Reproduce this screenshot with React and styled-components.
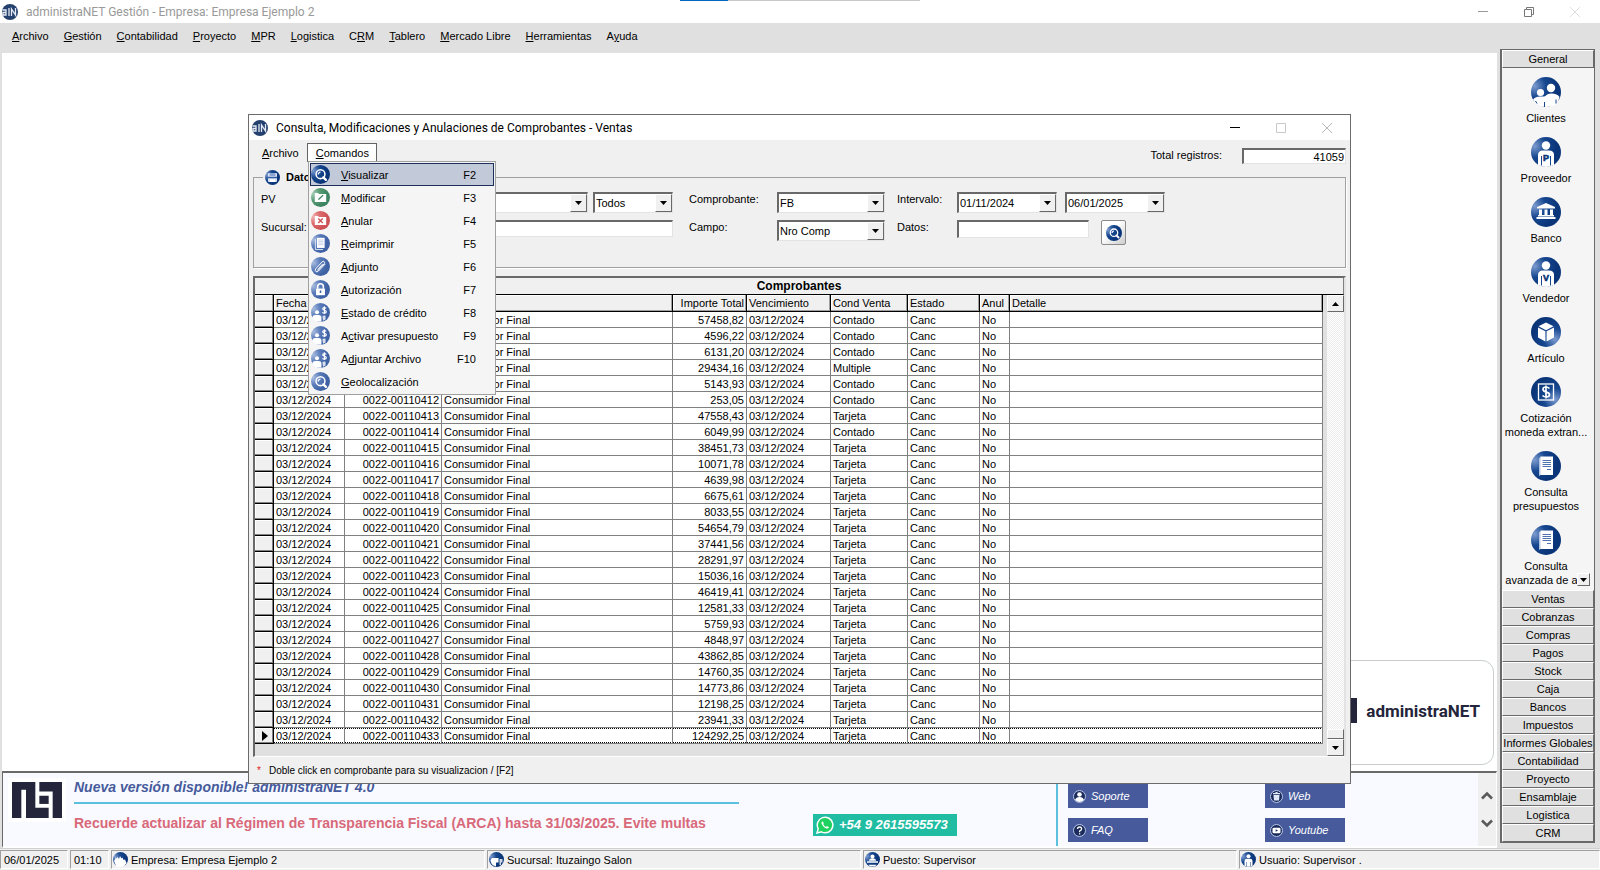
import React, { useState } from 'react';
import styled, { createGlobalStyle, css } from 'styled-components';

const GlobalStyle = createGlobalStyle`
  * {
    box-sizing: border-box;
  }
  body {
    margin: 0;
    background: #e0e0e0;
    color: #000000;
    font-family: 'Liberation Sans', Arial, sans-serif;
    font-size: 11px;
    line-height: 14px;
  }
  button,
  input,
  select {
    font: inherit;
    color: inherit;
  }
`;

const AppWrap = styled.div`
  display: flex;
  flex-direction: column;
  min-height: 100vh;
`;

const TitleBar = styled.header`
  position: relative;
  display: flex;
  align-items: center;
  height: 23px;
  padding: 0 2px;
  background: #ffffff;
`;

const TopStrip = styled.div`
  position: absolute;
  top: 0;
  left: 680px;
  width: 240px;
  height: 1px;
  background: linear-gradient(to right, #0067c0 20%, #c8c8c8 20%);
`;

const AppTitle = styled.h1`
  flex: 1;
  margin: 0 0 0 8px;
  font-family: Roboto, 'Open Sans', sans-serif;
  font-size: 12px;
  font-weight: 400;
  line-height: 16px;
  color: ${props => (props.$active ? '#000000' : '#999999')};
`;

const WinButton = styled.button`
  display: flex;
  align-items: center;
  justify-content: center;
  width: 46px;
  height: 100%;
  padding: 0;
  border: 0;
  background: transparent;
  color: ${props => props.$color};
`;

const MenuBar = styled.nav`
  display: flex;
  align-items: center;
  height: 26px;
  padding: 0 5px;
`;

const MenuButton = styled.button`
  padding: 0 8px 0 7px;
  border: 0;
  background: transparent;
  white-space: nowrap;
`;

const Main = styled.div`
  flex: 1;
  display: flex;
`;

const Workspace = styled.main`
  position: relative;
  flex: 1;
  display: flex;
  flex-direction: column;
  margin-top: 4px;
  padding-left: 2px;
`;

const Desktop = styled.div`
  position: relative;
  flex: 1;
  background: #ffffff;
`;

const BrandCard = styled.div`
  position: absolute;
  right: 3px;
  bottom: 6px;
  display: flex;
  align-items: center;
  gap: 9px;
  height: 105px;
  padding: 0 13px 4px 30px;
  border: 1px solid #c8cccc;
  border-radius: 12px;
  color: #24243a;
  font-family: Roboto, sans-serif;
  font-size: 17px;
  font-weight: 700;
`;

/* ---------- outlook bar ---------- */

const SideBar = styled.aside`
  width: 95px;
  margin: 0 5px 0 3px;
`;

const SideFrame = styled.div`
  border: 1px solid #696969;
  border-left-width: 2px;
  background: #f5f5f5;
`;

const SideButton = styled.button`
  display: block;
  width: 100%;
  height: 18px;
  padding: 0;
  border: 1px solid;
  border-color: #ffffff #696969 #696969 #ffffff;
  background: #e0e0e0;
  line-height: 16px;
  white-space: nowrap;
`;

const SideList = styled.div`
  position: relative;
  padding: 9px 4px 3px 0;
`;

const SideItem = styled.button`
  display: flex;
  flex-direction: column;
  align-items: center;
  gap: 4px;
  width: 100%;
  padding: 0;
  margin-bottom: 12px;
  border: 0;
  background: transparent;

  &:last-of-type {
    margin-bottom: 0;
  }
`;

const SideLabel = styled.span`
  width: 86px;
  text-align: center;
`;

const SideScroll = styled.span`
  position: absolute;
  right: 4px;
  bottom: 4px;
  display: flex;
  align-items: center;
  justify-content: center;
  width: 13px;
  height: 13px;
  border: 1px solid;
  border-color: #ffffff #696969 #696969 #ffffff;
  background: #f0f0f0;
`;

/* ---------- child window ---------- */

const ChildWindow = styled.section`
  position: absolute;
  z-index: 2;
  top: 61px;
  left: 248px;
  right: 146px;
  border: 1px solid #6b6b6b;
  background: #f0f0f0;
`;

const ChildTitle = styled.div`
  display: flex;
  align-items: center;
  height: 25px;
  padding-left: 3px;
  background: #ffffff;
`;

const ChildBody = styled.div`
  padding: 3px 4px 5px;
`;

const ToolRow = styled.div`
  display: flex;
  align-items: flex-start;
  justify-content: space-between;
  height: 26px;
`;

const ChildMenu = styled.div`
  position: relative;
  display: flex;
`;

const ChildMenuButton = styled.button`
  height: 19px;
  padding: 0 7px 0 8px;
  border: 1px solid transparent;
  border-bottom: 0;
  background: transparent;

  ${props =>
    props.$open &&
    css`
      border-color: #646464;
      background: #ffffff;
    `}
`;

const Popup = styled.div`
  position: absolute;
  z-index: 5;
  top: 18px;
  left: 55px;
  width: 188px;
  padding: 1px;
  border: 1px solid #a0a0a0;
  background: #f5f5f5;
`;

const PopupItem = styled.button`
  display: grid;
  grid-template-columns: 22px 1fr auto;
  align-items: center;
  column-gap: 8px;
  width: 100%;
  height: 23px;
  padding: 0 17px 0 0;
  border: 1px solid ${props => (props.$selected ? '#1c2f5a' : 'transparent')};
  background: ${props => (props.$selected ? '#c2cad9' : 'transparent')};
  text-align: left;
`;

const TotalBox = styled.div`
  display: flex;
  gap: 20px;
  padding: 5px 0 0;
`;

const TextBox = styled.input`
  width: ${props => props.$width || '100%'};
  height: ${props => props.$height || '18px'};
  padding: 0 1px;
  border: 1px solid;
  border-color: #696969 #e3e3e3 #e3e3e3 #696969;
  border-width: 2px 1px 1px 2px;
  border-radius: 0;
  background: #ffffff;
  text-align: ${props => props.$align || 'left'};
`;

const FilterBox = styled.fieldset`
  margin: 0;
  padding: 7px 7px 26px;
  border: 1px solid #a0a0a0;
  box-shadow: 1px 1px 0 #ffffff;
`;

const FilterLegend = styled.legend`
  display: flex;
  align-items: center;
  gap: 6px;
  height: 16px;
  margin-left: 2px;
  padding: 0 4px 0 2px;
  font-weight: 700;
`;

const FilterGrid = styled.div`
  display: grid;
  grid-template-columns: 49px 363px 104px 108px 72px auto;
  row-gap: 7px;
  align-items: start;
  justify-content: start;
  height: 49px;
`;

const FieldLabel = styled.label`
  padding-left: ${props => props.$indent || '0'};
`;

const FieldRow = styled.div`
  display: flex;
  gap: ${props => props.$gap || '8px'};
`;

const SelectWrap = styled.span`
  position: relative;
  display: block;
  width: ${props => props.$width || '100%'};
  height: 21px;
  border: 1px solid;
  border-width: 2px 1px 1px 2px;
  border-color: #696969 #e3e3e3 #e3e3e3 #696969;
  background: #ffffff;
`;

const SelectBox = styled.select`
  appearance: none;
  display: block;
  width: 100%;
  height: 18px;
  padding: 0 18px 0 1px;
  border: 0;
  border-radius: 0;
  background: transparent;
`;

const SelectArrow = styled.span`
  position: absolute;
  top: 0;
  right: 0;
  bottom: 0;
  display: flex;
  align-items: center;
  justify-content: center;
  width: 17px;
  border: 1px solid;
  border-color: #ffffff #696969 #696969 #ffffff;
  background: #f0f0f0;
  pointer-events: none;
`;

const SearchButton = styled.button`
  display: flex;
  align-items: center;
  justify-content: center;
  width: 25px;
  height: 25px;
  padding: 0;
  border: 1px solid #8c8c8c;
  border-radius: 2px;
  background: linear-gradient(135deg, #ffffff 40%, #cccccc);
`;

/* ---------- grid ---------- */

const GridBox = styled.div`
  margin-top: 8px;
  border: 1px solid;
  border-width: 2px 2px 1px 2px;
  border-color: #696969 #e3e3e3 #ffffff #696969;
`;

const GridCaption = styled.div`
  height: 17px;
  border-bottom: 1px solid #000000;
  border-right: 1px solid #808080;
  font-size: 12px;
  font-weight: 700;
  line-height: 16px;
  text-align: center;
`;

const GridArea = styled.div`
  display: flex;
`;

const TableWrap = styled.div`
  flex: 1;
  padding: 0 4px 12px 0;
  background: #e0e0e0;
`;

const Table = styled.table`
  width: 100%;
  table-layout: fixed;
  border-collapse: separate;
  border-spacing: 0;
`;

const HeadCell = styled.th`
  height: 17px;
  padding: 0 2px;
  border-right: 1px solid #000000;
  border-bottom: 1px solid #000000;
  background: #f0f0f0;
  box-shadow: inset -1px -1px 0 #a0a0a0, inset 1px 1px 0 #ffffff;
  font-weight: 400;
  text-align: ${props => props.$align || 'left'};
  white-space: nowrap;
`;

const Cell = styled.td`
  height: 16px;
  padding: 0 2px;
  border-right: 1px solid #808080;
  border-bottom: 1px solid #808080;
  background: #ffffff;
  text-align: ${props => props.$align || 'left'};
  white-space: nowrap;

  ${props =>
    props.$current &&
    css`
      background-image: repeating-linear-gradient(
          to right,
          #000000 0 1px,
          transparent 1px 2px
        ),
        repeating-linear-gradient(to right, #000000 0 1px, transparent 1px 2px);
      background-size: 100% 1px;
      background-position: top, bottom;
      background-repeat: no-repeat;
    `}
`;

const RowMark = styled.td`
  height: 16px;
  padding: 0 5px 0 0;
  border-right: 1px solid #000000;
  border-bottom: 1px solid #000000;
  background: #f0f0f0;
  box-shadow: inset -1px -1px 0 #808080, inset 1px 1px 0 #ffffff;

  svg {
    display: block;
    margin-left: auto;
  }
`;

const ScrollBar = styled.div`
  display: flex;
  flex-direction: column;
  width: 17px;
`;

const ScrollTrack = styled.div`
  flex: 1;
  background: repeating-conic-gradient(#ffffff 0 25%, #ececec 0 50%) 0 0 / 2px
    2px;
`;

const ScrollButton = styled.button`
  display: flex;
  align-items: center;
  justify-content: center;
  width: 17px;
  height: 17px;
  padding: 0;
  border: 1px solid;
  border-color: #ffffff #696969 #696969 #ffffff;
  background: #f0f0f0;
`;

const ScrollThumb = styled.div`
  height: 10px;
  border: 1px solid;
  border-color: #ffffff #696969 #696969 #ffffff;
  background: #f0f0f0;
`;

const HelpLine = styled.p`
  margin: 7px 0 0;
  padding-left: 4px;
  font-size: 10px;
  line-height: 14px;

  span {
    margin-right: 8px;
    color: #e02020;
  }
`;

/* ---------- news banner ---------- */

const Banner = styled.section`
  display: flex;
  height: 77px;
  border: 1px solid;
  border-width: 2px 1px 2px 1px;
  border-color: #696969 #ffffff #ffffff #696969;
  background: #f8faff;
`;

const LogoBox = styled.div`
  width: 58px;
  height: 44px;
  margin: 5px 0 0 5px;
  padding: 4px;
  background: #ffffff;
`;

const News = styled.div`
  flex: 1;
  display: flex;
  align-items: flex-start;
  padding-left: 8px;
`;

const NewsText = styled.div`
  width: 665px;
`;

const NewsTitle = styled.h2`
  margin: 0;
  padding: 5px 0 6px;
  border-bottom: 2px solid #5bc0de;
  color: #465a9c;
  font-size: 14px;
  font-style: italic;
  font-weight: 700;
  line-height: 18px;
`;

const NewsAlert = styled.p`
  margin: 9px 0 0;
  color: #d9697a;
  font-size: 14px;
  font-weight: 700;
  line-height: 20px;
  white-space: nowrap;
`;

const Phone = styled.a`
  display: flex;
  align-items: center;
  gap: 5px;
  height: 22px;
  margin: 41px 0 0 74px;
  padding: 0 9px 0 3px;
  background: #20bda2;
  color: #ffffff;
  font-size: 13px;
  font-style: italic;
  font-weight: 700;
  text-decoration: none;
  white-space: nowrap;
`;

const Links = styled.div`
  display: grid;
  grid-template-columns: 80px 80px;
  grid-auto-rows: 24px;
  column-gap: 117px;
  row-gap: 10px;
  width: 422px;
  padding: 11px 0 0 10px;
  border-left: 2px solid #5bc0de;
`;

const LinkButton = styled.a`
  display: flex;
  align-items: center;
  gap: 5px;
  padding-left: 5px;
  background: #465a9c;
  color: #ffffff;
  font-size: 11px;
  font-style: italic;
  text-decoration: none;
`;

const BannerScroll = styled.div`
  display: flex;
  flex-direction: column;
  justify-content: space-between;
  align-items: center;
  width: 18px;
  padding: 16px 0 15px;
  background: #f0f0f0;

  button {
    display: block;
    padding: 0;
    border: 0;
    background: transparent;
  }
`;

/* ---------- status bar ---------- */

const StatusBar = styled.footer`
  display: grid;
  grid-template-columns: 68px 39px 374fr 374fr 374fr 361fr;
  column-gap: 2px;
  padding: 1px 0;
  border-top: 1px solid #d0d0d0;
  background: #f0f0f0;
`;

const StatusPanel = styled.div`
  display: flex;
  align-items: center;
  gap: 3px;
  height: 19px;
  padding: 0 1px;
  border: 1px solid;
  border-color: #a0a0a0 #ffffff #ffffff #a0a0a0;
  white-space: nowrap;
`;

const StatusText = styled.span`
  padding-left: ${props => (props.$plain ? '2px' : '0')};
`;

/* ---------- icons ---------- */

const ORB_COLORS = {
  navy: ['#7d9cd0', '#16478f', '#0b3579'],
  blue: ['#a9bcdf', '#5b7dbb', '#3f62a5'],
  green: ['#a3cdb4', '#559a73', '#3c8560'],
  red: ['#f2b3b3', '#dc6a6c', '#cc5355'],
};

const Glyph = ({ name }) => {
  switch (name) {
    case 'people':
      return (
        <g fill="#fff">
          <circle cx="20" cy="11" r="4.200" />
          <circle cx="9.500" cy="15.500" r="3.600" />
          <path d="M2 22.500q3-3.500 8-3 3.500 0 4.500-.5 1.500-2.500 6-2.500 6 0 8 3.500Q27 30 15 30 5 30 2 22.500z" />
          <path d="M13.500 25v5M4.500 24l1.500 2.500M25 22.500v4" stroke="#16478f" strokeWidth="1" />
        </g>
      );
    case 'personP':
    case 'personV':
      return (
        <g fill="#fff">
          <circle cx="15" cy="8.500" r="4.200" />
          <path d="M7 28V18q0-4.500 5-4.500h6q5 0 5 4.500v10q-8 4-16 0z" />
          <path d="M10.500 19v9.500M19.500 19v9.500" stroke="#16478f" strokeWidth="1" />
          <text
            x="15"
            y="23.500"
            textAnchor="middle"
            fontFamily="Liberation Sans"
            fontSize="9"
            fontWeight="700"
            stroke="#0b3579"
            strokeWidth=".6"
            fill="#0b3579"
          >
            {name === 'personP' ? 'P' : 'V'}
          </text>
        </g>
      );
    case 'bank':
      return (
        <g fill="#fff">
          <path d="M15 6l9 4v1.500H6V10z" />
          <path d="M8 12.500h3V18H8zM13.500 12.500h3V18h-3zM19 12.500h3V18h-3zM7 18h16v1.500H7zM5.500 20h19v2h-19z" />
        </g>
      );
    case 'box':
      return (
        <g fill="#fff">
          <path d="M15 5.500l7.500 3.800L15 13.300 7.500 9.300z" />
          <path d="M7 10.500l7.400 3.800V24.500L7 20.500zM23 10.500l-7.400 3.800v10.200L23 20.500z" />
        </g>
      );
    case 'money':
      return (
        <g>
          <rect x="7.500" y="7" width="15" height="16" fill="none" stroke="#fff" strokeWidth="1.300" />
          <path
            d="M18.500 11.500q-1.500-1.500-3.700-1.500-2.800 0-2.800 2.200 0 1.900 3 2.700 3.500.9 3.500 2.900 0 2.200-3.300 2.200-2.200 0-3.700-1.500M15 8.500v13"
            fill="none"
            stroke="#fff"
            strokeWidth="1.700"
          />
        </g>
      );
    case 'doc':
      return (
        <g>
          <path d="M8 7l3-1v17l-3 2z" fill="#b5c6e3" />
          <path d="M9.500 5.500H22V24H9.500z" fill="#fff" />
          <path d="M11.500 9.500h8.500M11.500 11.500h8.500M11.500 13.500h8.500M11.500 15.500h8.500M16 18.500h4" stroke="#3c62a8" strokeWidth=".9" />
        </g>
      );
    case 'search':
      return (
        <g fill="none" stroke="#fff">
          <circle cx="15" cy="14.500" r="7" strokeWidth="2.400" />
          <path d="M11.500 15a3.500 3.500 0 013.500-3.700" strokeWidth="2" />
          <path d="M19.500 19.500l4 4" strokeWidth="3.600" strokeLinecap="round" />
        </g>
      );
    case 'edit':
      return (
        <g>
          <path d="M6 8h5l1.500 1.500H24V22H6z" fill="#fff" />
          <path d="M11 19l1-2.500 6.500-6 1.500 1.500-6.500 6z" fill="#3c8560" />
        </g>
      );
    case 'cancel':
      return (
        <g>
          <path d="M6 8h5l1.500 1.500H24V22H6z" fill="#fff" />
          <path d="M11.500 12l7 7M18.500 12l-7 7" stroke="#cc5355" strokeWidth="2.200" />
        </g>
      );
    case 'print':
      return (
        <g>
          <path d="M9.500 6h12v16h-12z" fill="#fff" />
          <path d="M11.500 9.500h8M11.500 12h8M11.500 14.500h8M11.500 17h8" stroke="#a9bcdf" strokeWidth="1" />
          <path d="M7 8v16.500h12" fill="none" stroke="#dde5f3" strokeWidth="1.500" />
        </g>
      );
    case 'clip':
      return (
        <path
          d="M10 22.500L21 10.500q1.500-2.500-.5-3.500-1.500-.8-3 .8L7.500 18.500q-2 3 .3 4.600 2 1 4-1L22.500 11M10.500 20l8-9"
          fill="none"
          stroke="#fff"
          strokeWidth="1.500"
        />
      );
    case 'lock':
      return (
        <g>
          <path d="M10.500 14v-3.500a4.500 4.500 0 019 0V14" fill="none" stroke="#fff" strokeWidth="2.400" />
          <rect x="8" y="13.500" width="14" height="10.500" fill="#fff" />
          <path d="M15 16.500v4" stroke="#3f62a5" strokeWidth="2.400" />
        </g>
      );
    case 'credit':
      return (
        <g fill="#fff">
          <circle cx="9.500" cy="14.500" r="3.200" />
          <path d="M2 24q0-5 5-5h5q4.500 0 4.500 4.500v6Q6 30 2 24z" />
          <path d="M18 21q2-2 5-1v6l-4 2z" opacity=".8" />
          <path
            d="M24 8.500q-1.200-1.300-3-1.300-2.500 0-2.500 2 0 1.500 2.700 2.200 3 .8 3 2.600 0 2-3 2-2 0-3.200-1.300M21.200 5v12.500"
            fill="none"
            stroke="#fff"
            strokeWidth="1.900"
          />
        </g>
      );
    case 'save':
      return (
        <g>
          <rect x="6" y="6" width="18" height="18" rx="2" fill="#dbe4f3" />
          <path d="M9 6h12v6H9z" fill="#8ea6d2" />
          <path d="M6 13.500h18v3H6z" fill="#2f5aa3" />
          <path d="M10 19h10v5H10z" fill="#fff" />
        </g>
      );
    case 'city':
      return <path d="M2 18l3-5v-3l3 3 1-4 3 5 2-6 3 5 2-2 2 5 3-1 3 7-5 7q-8 4-15 1z" fill="#fff" />;
    case 'branch':
      return (
        <g fill="#fff">
          <path d="M6 12h13v9h-5v8Q3 26 3 16z" />
          <path d="M21 14h6v7h-3v5h-3z" opacity=".8" />
        </g>
      );
    case 'desk':
      return (
        <g fill="#fff">
          <circle cx="15" cy="9" r="4" />
          <path d="M8 17.500q0-5 7-5t7 5z" />
          <path d="M4 18.500h22v3H4zM7 25.500h16l-3 3.500h-10z" />
        </g>
      );
    case 'user':
      return (
        <g fill="#fff">
          <circle cx="15" cy="8.500" r="4" />
          <path d="M7 27v-9q0-4.500 5-4.500h6q5 0 5 4.500v9l-3 2v-9h-1v9.500h-8V20h-1v9z" />
        </g>
      );
    default:
      return null;
  }
};

const Orb = ({ name, tone = 'navy', size = 22, flip }) => {
  const colors = ORB_COLORS[tone];
  const id = `orb-${tone}-${flip ? 'b' : 'a'}`;
  return (
    <svg width={size} height={size} viewBox="0 0 30 30" aria-hidden="true">
      <defs>
        <radialGradient id={id} cx={flip ? '80%' : '12%'} cy={flip ? '75%' : '30%'} r="75%">
          <stop offset="0" stopColor={colors[0]} />
          <stop offset=".5" stopColor={colors[1]} />
          <stop offset="1" stopColor={colors[2]} />
        </radialGradient>
      </defs>
      <circle cx="15" cy="15" r="15" fill={`url(#${id})`} />
      <Glyph name={name} />
    </svg>
  );
};

const AppIcon = () => (
  <svg width="16" height="16" viewBox="0 0 16 16" aria-hidden="true">
    <circle cx="8" cy="8" r="8" fill="#24406e" />
    <path d="M.5 6H4v5H1V8.500h3M7 4v8M9.500 12V5l4 6V4" fill="none" stroke="#e6ecf5" strokeWidth="1.300" />
  </svg>
);

const BrandLogo = ({ width, height }) => (
  <svg width={width} height={height} viewBox="0 0 150 110" preserveAspectRatio="none" aria-hidden="true">
    <g fill="#24243a">
      <path d="M0 0H70V79H110V110H42V24H28V110H0z" />
      <path d="M82 42H110V67H82z" />
      <path d="M82 0H150V110H122V29H82z" />
    </g>
  </svg>
);

const Triangle = ({ dir = 'down' }) => (
  <svg width="7" height="4" viewBox="0 0 7 4" aria-hidden="true">
    <path d={dir === 'down' ? 'M0 0H7L3.500 4z' : 'M0 4H7L3.500 0z'} fill="#000" />
  </svg>
);

const Chevron = ({ dir }) => (
  <svg width="12" height="9" viewBox="0 0 12 9" aria-hidden="true">
    <path
      d={dir === 'up' ? 'M1 7.500L6 2.500 11 7.500' : 'M1 1.500L6 6.500 11 1.500'}
      fill="none"
      stroke="#5a5a5a"
      strokeWidth="2.600"
    />
  </svg>
);

const MinIcon = () => (
  <svg width="10" height="10" viewBox="0 0 10 10" aria-hidden="true">
    <path d="M0 4.500H10" stroke="currentColor" />
  </svg>
);

const MaxIcon = () => (
  <svg width="10" height="10" viewBox="0 0 10 10" aria-hidden="true">
    <path d="M.5.5H9.500V9.500H.5z" fill="none" stroke="currentColor" />
  </svg>
);

const RestoreIcon = () => (
  <svg width="10" height="10" viewBox="0 0 10 10" aria-hidden="true">
    <path d="M.5 2.500H7.500V9.500H.5zM2.500 2.500V.5H9.500V7.500H7.500" fill="none" stroke="currentColor" />
  </svg>
);

const CloseIcon = () => (
  <svg width="10" height="10" viewBox="0 0 10 10" aria-hidden="true">
    <path d="M0 0L10 10M10 0L0 10" stroke="currentColor" />
  </svg>
);

const WhatsIcon = () => (
  <svg width="18" height="18" viewBox="0 0 18 18" aria-hidden="true">
    <path d="M1 17l1.200-4.300A7.800 7.800 0 119.200 16.800q-2 0-3.800-1z" fill="#1fd15f" stroke="#fff" strokeWidth="1.500" />
    <path d="M6.300 5.200q-1.300 1-.6 2.800 1.300 3 4.600 4.500 2 .5 2.700-1.200l-2-1.300-1.100 1Q8 10.200 7.200 8l.7-1z" fill="#fff" />
  </svg>
);

const LinkIcon = ({ name }) => (
  <svg width="13" height="13" viewBox="0 0 13 13" aria-hidden="true">
    <circle cx="6.500" cy="6.500" r="6" fill="#1b2c5c" stroke="#b9c6e6" />
    {name === 'user' && (
      <g fill="#fff">
        <circle cx="6.500" cy="4.500" r="2.300" />
        <path d="M2 10q1-3 4.500-3t4.500 3q-4.500 4-9 0z" />
      </g>
    )}
    {name === 'faq' && (
      <g fill="none" stroke="#fff" strokeWidth="1.300">
        <path d="M4.500 5Q4.600 3 6.600 3t2 1.900Q8.600 6 6.600 7v1.200M6.600 9.200v1.300" />
      </g>
    )}
    {name === 'web' && (
      <g fill="#dfe6f5">
        <path d="M3.500 5h6l-.5 5.500H4z" />
        <path d="M3 3h7v1.200H3zM5.500 2h2v1h-2z" />
      </g>
    )}
    {name === 'video' && (
      <g>
        <rect x="2.500" y="3.700" width="8" height="5.600" rx="1.300" fill="#fff" />
        <path d="M5.600 5.200L8 6.500 5.600 7.800z" fill="#1b2c5c" />
      </g>
    )}
  </svg>
);

/* ---------- data ---------- */

// [text, index of the underlined access key]
const MAIN_MENU = [
  ['Archivo', 0],
  ['Gestión', 0],
  ['Contabilidad', 0],
  ['Proyecto', 0],
  ['MPR', 0],
  ['Logistica', 0],
  ['CRM', 1],
  ['Tablero', 0],
  ['Mercado Libre', 0],
  ['Herramientas', 0],
  ['Ayuda', 1],
];

const COMMANDS = [
  ['Visualizar', 0, 'F2', 'search', 'navy'],
  ['Modificar', 0, 'F3', 'edit', 'green'],
  ['Anular', 0, 'F4', 'cancel', 'red'],
  ['Reimprimir', 0, 'F5', 'print', 'blue'],
  ['Adjunto', 0, 'F6', 'clip', 'blue'],
  ['Autorización', 0, 'F7', 'lock', 'blue'],
  ['Estado de crédito', 0, 'F8', 'credit', 'blue'],
  ['Activar presupuesto', 1, 'F9', 'credit', 'blue'],
  ['Adjuntar Archivo', 1, 'F10', 'credit', 'blue'],
  ['Geolocalización', 0, '', 'search', 'blue'],
];

const SIDE_ITEMS = [
  ['Clientes', 'people'],
  ['Proveedor', 'personP'],
  ['Banco', 'bank'],
  ['Vendedor', 'personV'],
  ['Artículo', 'box'],
  ['Cotización moneda extran...', 'money'],
  ['Consulta presupuestos', 'doc'],
  ['Consulta avanzada de a...', 'doc'],
];

const SIDE_GROUPS = [
  'Ventas',
  'Cobranzas',
  'Compras',
  'Pagos',
  'Stock',
  'Caja',
  'Bancos',
  'Impuestos',
  'Informes Globales',
  'Contabilidad',
  'Proyecto',
  'Ensamblaje',
  'Logistica',
  'CRM',
];

const COLUMNS = [
  ['Fecha', 71],
  ['Nro Comp', 97],
  ['Cliente', 231],
  ['Importe Total', 74, 'right'],
  ['Vencimiento', 84],
  ['Cond Venta', 77],
  ['Estado', 72],
  ['Anul', 30],
  ['Detalle'],
];

const FIRST_NUMBER = 110407;

const ROWS = [
  ['57458,82', 'Contado'],
  ['4596,22', 'Contado'],
  ['6131,20', 'Contado'],
  ['29434,16', 'Multiple'],
  ['5143,93', 'Contado'],
  ['253,05', 'Contado'],
  ['47558,43', 'Tarjeta'],
  ['6049,99', 'Contado'],
  ['38451,73', 'Tarjeta'],
  ['10071,78', 'Tarjeta'],
  ['4639,98', 'Tarjeta'],
  ['6675,61', 'Tarjeta'],
  ['8033,55', 'Tarjeta'],
  ['54654,79', 'Tarjeta'],
  ['37441,56', 'Tarjeta'],
  ['28291,97', 'Tarjeta'],
  ['15036,16', 'Tarjeta'],
  ['46419,41', 'Tarjeta'],
  ['12581,33', 'Tarjeta'],
  ['5759,93', 'Tarjeta'],
  ['4848,97', 'Tarjeta'],
  ['43862,85', 'Tarjeta'],
  ['14760,35', 'Tarjeta'],
  ['14773,86', 'Tarjeta'],
  ['12198,25', 'Tarjeta'],
  ['23941,33', 'Tarjeta'],
  ['124292,25', 'Tarjeta'],
];

const AccessText = ({ text, index }) => (
  <span>
    {text.slice(0, index)}
    <u>{text[index]}</u>
    {text.slice(index + 1)}
  </span>
);

const Select = ({ id, value, width, label }) => (
  <SelectWrap $width={width}>
    <SelectBox id={id} defaultValue={value} aria-label={label}>
      <option>{value}</option>
    </SelectBox>
    <SelectArrow>
      <Triangle />
    </SelectArrow>
  </SelectWrap>
);

const WindowButtons = ({ inactive }) => (
  <>
    <WinButton $color={inactive ? '#999999' : '#000000'} aria-label="Minimizar">
      <MinIcon />
    </WinButton>
    <WinButton $color={inactive ? '#777777' : '#c8c8c8'} aria-label="Maximizar">
      {inactive ? <RestoreIcon /> : <MaxIcon />}
    </WinButton>
    <WinButton $color={inactive ? '#e0e0e0' : '#b8b8b8'} aria-label="Cerrar">
      <CloseIcon />
    </WinButton>
  </>
);

const Filters = () => (
  <FilterBox>
    <FilterLegend>
      <Orb name="save" size={15} />
      Datos
    </FilterLegend>
    <FilterGrid>
      <FieldLabel htmlFor="pv">PV</FieldLabel>
      <FieldRow $gap="5px">
        <Select id="pv" value="" width="278px" />
        <Select value="Todos" width="80px" label="Tipo" />
      </FieldRow>
      <FieldLabel htmlFor="comprobante" $indent="16px">
        Comprobante:
      </FieldLabel>
      <Select id="comprobante" value="FB" />
      <FieldLabel htmlFor="desde" $indent="12px">
        Intervalo:
      </FieldLabel>
      <FieldRow>
        <Select id="desde" value="01/11/2024" width="100px" />
        <Select value="06/01/2025" width="100px" label="Hasta" />
      </FieldRow>
      <FieldLabel htmlFor="sucursal">Sucursal:</FieldLabel>
      <TextBox id="sucursal" $height="17px" />
      <FieldLabel htmlFor="campo" $indent="16px">
        Campo:
      </FieldLabel>
      <Select id="campo" value="Nro Comp" />
      <FieldLabel htmlFor="datos" $indent="12px">
        Datos:
      </FieldLabel>
      <FieldRow $gap="12px">
        <TextBox id="datos" $width="132px" />
        <SearchButton aria-label="Buscar">
          <Orb name="search" size={16} />
        </SearchButton>
      </FieldRow>
    </FilterGrid>
  </FilterBox>
);

const VoucherTable = () => (
  <GridBox>
    <GridCaption id="grid-caption">Comprobantes</GridCaption>
    <GridArea>
      <TableWrap>
        <Table aria-labelledby="grid-caption">
          <colgroup>
            <col width="19" />
            {COLUMNS.map(([name, width]) => (
              <col key={name} width={width} />
            ))}
          </colgroup>
          <thead>
            <tr>
              <HeadCell />
              {COLUMNS.map(([name, , align]) => (
                <HeadCell key={name} $align={align}>
                  {name}
                </HeadCell>
              ))}
            </tr>
          </thead>
          <tbody>
            {ROWS.map(([amount, terms], i) => {
              const current = i === ROWS.length - 1;
              return (
                <tr key={i}>
                  <RowMark>
                    {current && (
                      <svg width="6" height="10" viewBox="0 0 6 10" aria-hidden="true">
                        <path d="M0 0L6 5 0 10z" />
                      </svg>
                    )}
                  </RowMark>
                  <Cell $current={current}>03/12/2024</Cell>
                  <Cell $current={current} $align="right">
                    0022-00{FIRST_NUMBER + i}
                  </Cell>
                  <Cell $current={current}>Consumidor Final</Cell>
                  <Cell $current={current} $align="right">
                    {amount}
                  </Cell>
                  <Cell $current={current}>03/12/2024</Cell>
                  <Cell $current={current}>{terms}</Cell>
                  <Cell $current={current}>Canc</Cell>
                  <Cell $current={current}>No</Cell>
                  <Cell $current={current} />
                </tr>
              );
            })}
          </tbody>
        </Table>
      </TableWrap>
      <ScrollBar>
        <ScrollButton aria-label="Subir">
          <Triangle dir="up" />
        </ScrollButton>
        <ScrollTrack />
        <ScrollThumb />
        <ScrollButton aria-label="Bajar">
          <Triangle />
        </ScrollButton>
      </ScrollBar>
    </GridArea>
  </GridBox>
);

const VoucherWindow = () => {
  const [open, setOpen] = useState(true);
  const [selected, setSelected] = useState(0);

  return (
    <ChildWindow>
      <ChildTitle>
        <AppIcon />
        <AppTitle as="h2" $active>
          Consulta, Modificaciones y Anulaciones de Comprobantes - Ventas
        </AppTitle>
        <WindowButtons />
      </ChildTitle>
      <ChildBody>
        <ToolRow>
          <ChildMenu>
            <ChildMenuButton>
              <AccessText text="Archivo" index={0} />
            </ChildMenuButton>
            <ChildMenuButton $open={open} onClick={() => setOpen(!open)}>
              <AccessText text="Comandos" index={0} />
            </ChildMenuButton>
            {open && (
              <Popup>
                {COMMANDS.map(([text, index, shortcut, icon, tone], i) => (
                  <PopupItem
                    key={text}
                    $selected={selected === i}
                    onMouseEnter={() => setSelected(i)}
                  >
                    <Orb name={icon} tone={tone} size={19} />
                    <AccessText text={text} index={index} />
                    <span>{shortcut}</span>
                  </PopupItem>
                ))}
              </Popup>
            )}
          </ChildMenu>
          <TotalBox>
            <label htmlFor="total">Total registros:</label>
            <TextBox id="total" defaultValue="41059" $width="104px" $height="16px" $align="right" />
          </TotalBox>
        </ToolRow>
        <Filters />
        <VoucherTable />
        <HelpLine>
          <span>*</span>
          Doble click en comprobante para su visualizacion / [F2]
        </HelpLine>
      </ChildBody>
    </ChildWindow>
  );
};

const App = () => {
  return (
    <AppWrap>
      <GlobalStyle />
      <TitleBar>
        <TopStrip />
        <AppIcon />
        <AppTitle>administraNET Gestión - Empresa: Empresa Ejemplo 2</AppTitle>
        <WindowButtons inactive />
      </TitleBar>
      <MenuBar>
        {MAIN_MENU.map(([text, index]) => (
          <MenuButton key={text}>
            <AccessText text={text} index={index} />
          </MenuButton>
        ))}
      </MenuBar>
      <Main>
        <Workspace>
          <Desktop>
            <BrandCard>
              <BrandLogo width={35} height={25} />
              administraNET
            </BrandCard>
          </Desktop>
          <Banner>
            <LogoBox>
              <BrandLogo width={50} height={36} />
            </LogoBox>
            <News>
              <NewsText>
                <NewsTitle>Nueva versión disponible! administraNET 4.0</NewsTitle>
                <NewsAlert>
                  Recuerde actualizar al Régimen de Transparencia Fiscal (ARCA) hasta 31/03/2025. Evite
                  multas
                </NewsAlert>
              </NewsText>
              <Phone href="#whatsapp">
                <WhatsIcon />
                +54 9 2615595573
              </Phone>
            </News>
            <Links>
              <LinkButton href="#soporte">
                <LinkIcon name="user" />
                Soporte
              </LinkButton>
              <LinkButton href="#web">
                <LinkIcon name="web" />
                Web
              </LinkButton>
              <LinkButton href="#faq">
                <LinkIcon name="faq" />
                FAQ
              </LinkButton>
              <LinkButton href="#youtube">
                <LinkIcon name="video" />
                Youtube
              </LinkButton>
            </Links>
            <BannerScroll>
              <button aria-label="Anterior">
                <Chevron dir="up" />
              </button>
              <button aria-label="Siguiente">
                <Chevron dir="down" />
              </button>
            </BannerScroll>
          </Banner>
          <VoucherWindow />
        </Workspace>
        <SideBar>
          <SideFrame>
            <SideButton>General</SideButton>
            <SideList>
              {SIDE_ITEMS.map(([text, icon]) => (
                <SideItem key={text}>
                  <Orb name={icon} size={30} flip={icon === 'box' || icon === 'money'} />
                  <SideLabel>{text}</SideLabel>
                </SideItem>
              ))}
              <SideScroll aria-hidden="true">
                <Triangle />
              </SideScroll>
            </SideList>
            {SIDE_GROUPS.map(group => (
              <SideButton key={group}>{group}</SideButton>
            ))}
          </SideFrame>
        </SideBar>
      </Main>
      <StatusBar>
        <StatusPanel>
          <StatusText $plain>06/01/2025</StatusText>
        </StatusPanel>
        <StatusPanel>
          <StatusText $plain>01:10</StatusText>
        </StatusPanel>
        <StatusPanel>
          <Orb name="city" size={15} />
          <StatusText>Empresa: Empresa Ejemplo 2</StatusText>
        </StatusPanel>
        <StatusPanel>
          <Orb name="branch" size={15} />
          <StatusText>Sucursal: Ituzaingo Salon</StatusText>
        </StatusPanel>
        <StatusPanel>
          <Orb name="desk" size={15} />
          <StatusText>Puesto: Supervisor</StatusText>
        </StatusPanel>
        <StatusPanel>
          <Orb name="user" size={15} />
          <StatusText>Usuario: Supervisor .</StatusText>
        </StatusPanel>
      </StatusBar>
    </AppWrap>
  );
};

export default App;
